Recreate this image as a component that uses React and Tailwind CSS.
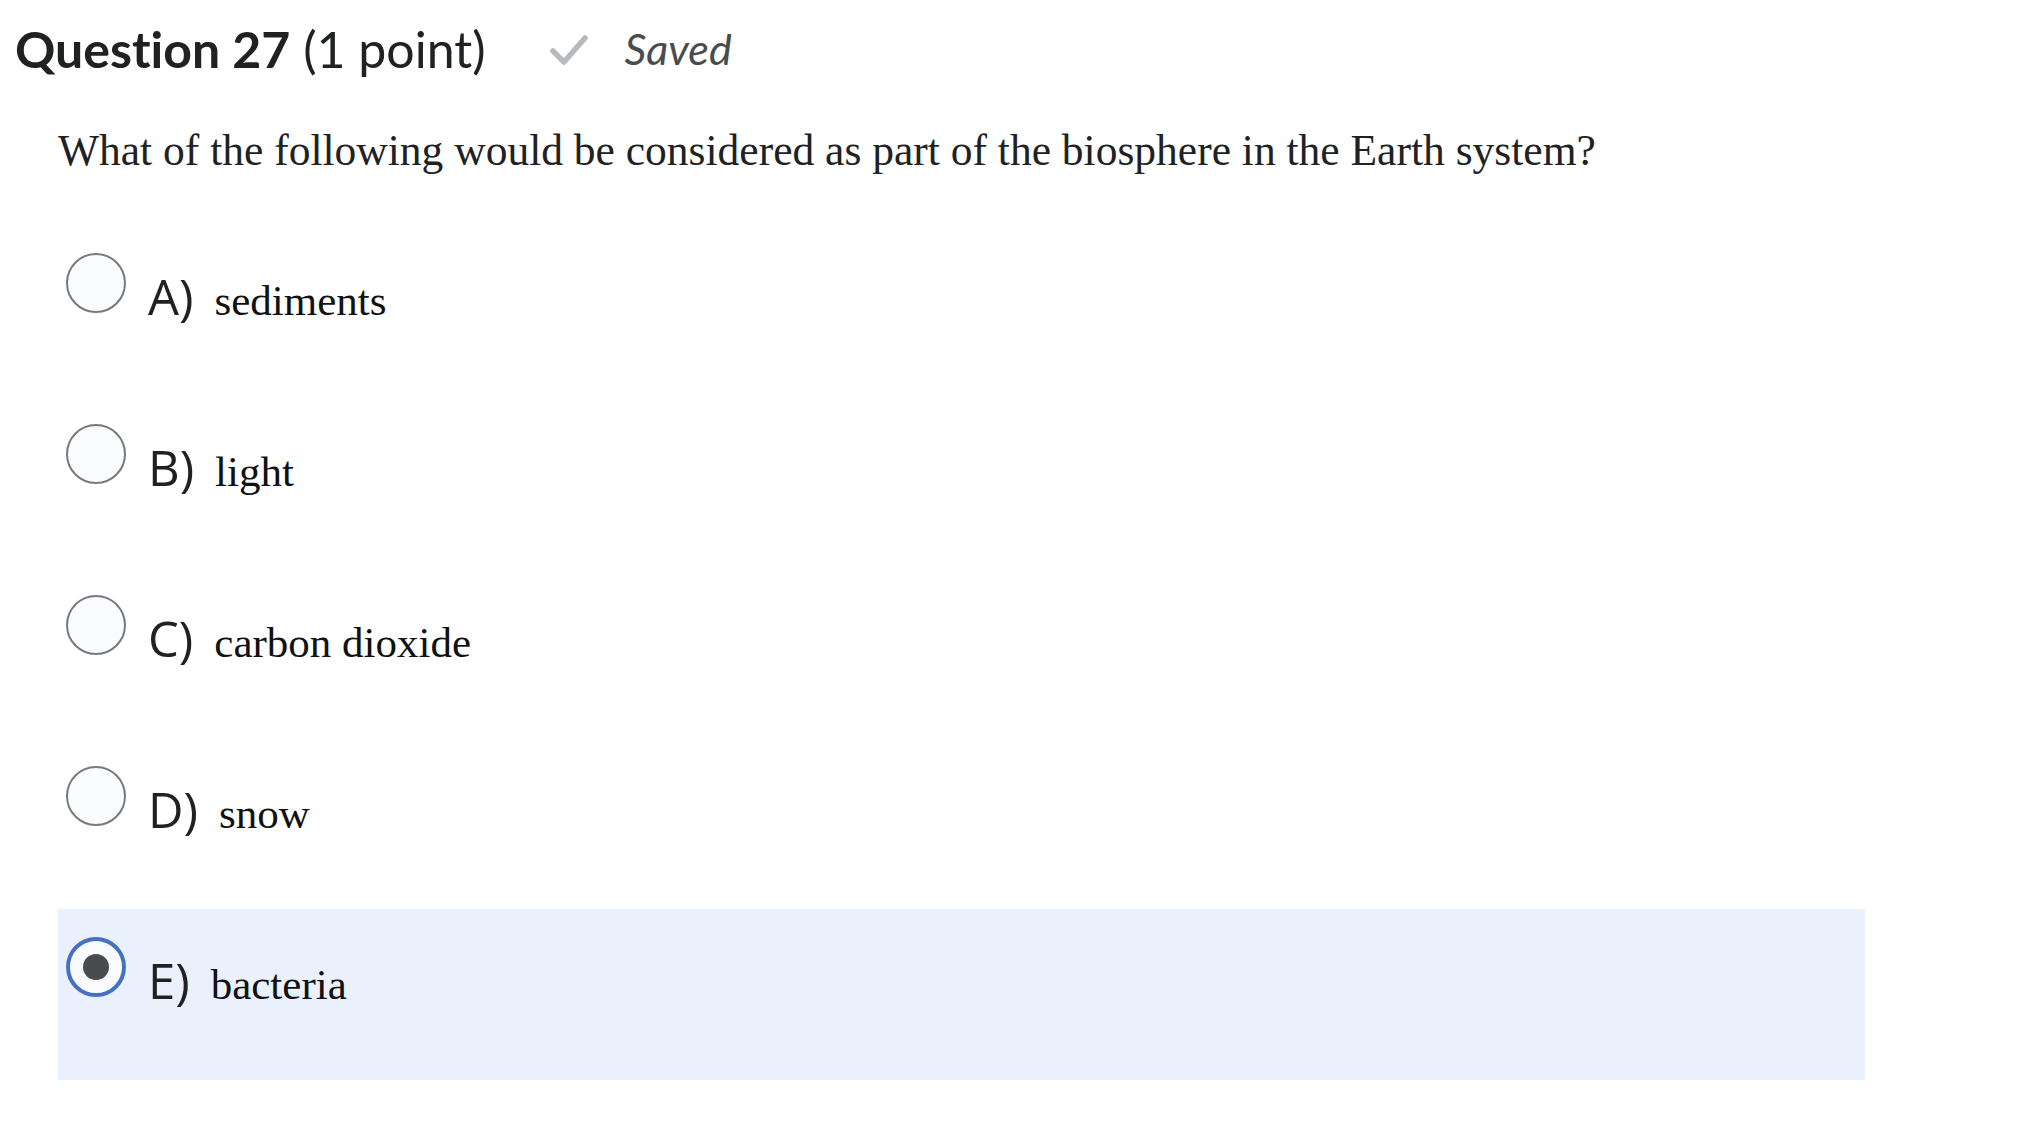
import { useState } from "react";

const choices = [
  { letter: "A)", text: "sediments" },
  { letter: "B)", text: "light" },
  { letter: "C)", text: "carbon dioxide" },
  { letter: "D)", text: "snow" },
  { letter: "E)", text: "bacteria" },
];

export default function App() {
  const [selected, setSelected] = useState(4);

  return (
    <div className="min-h-screen bg-white text-[#202122]">
      {/* Header */}
      <div className="flex items-center pl-[15px] pt-[21px] font-['Lato',sans-serif] [font-variant-ligatures:none]">
        <h2 className="text-[50px] leading-[56px]">
          <span className="font-bold">Question 27</span>{" "}
          <span className="font-normal">(1 point)</span>
        </h2>
        <svg
          className="ml-[64px] mt-[2px]"
          width="38"
          height="30"
          viewBox="0 0 38 30"
          fill="none"
        >
          <path
            d="M3 16 L14 27 L35 3"
            stroke="#b7babd"
            strokeWidth="5.5"
            strokeLinecap="round"
            strokeLinejoin="round"
          />
        </svg>
        <span className="ml-[37px] text-[43px] italic text-[#494c4e] leading-[56px]">
          Saved
        </span>
      </div>

      {/* Question */}
      <p className="mt-[48px] ml-[58px] font-['Liberation_Serif',serif] text-[43.5px] leading-[50px] text-[#202122]">
        What of the following would be considered as part of the biosphere in
        the Earth system?
      </p>

      {/* Choices */}
      <div className="mt-[50px] ml-[58px] w-[1807px]">
        {choices.map((c, i) => {
          const isSel = selected === i;
          return (
            <div
              key={c.letter}
              onClick={() => setSelected(i)}
              className={`flex h-[171px] items-start pl-2 pt-[28px] cursor-pointer ${
                isSel ? "bg-[#eaf1fc]" : "bg-white"
              }`}
            >
              {isSel ? (
                <div className="flex h-[60px] w-[60px] shrink-0 items-center justify-center rounded-full border-[4px] border-[#4571c4] bg-[#f9fbff]">
                  <div className="h-[26px] w-[26px] rounded-full bg-[#494c4e]" />
                </div>
              ) : (
                <div className="h-[60px] w-[60px] shrink-0 rounded-full border-2 border-[#78797b] bg-[#f9fbff]" />
              )}
              <div className="ml-[22px] mt-[19px] flex items-baseline">
                <span className="font-['Open_Sans',sans-serif] text-[49px] leading-[48px] text-[#202122]">
                  {c.letter}
                </span>
                <span className="ml-[21px] font-['Liberation_Serif',serif] text-[43px] leading-[48px] text-[#111]">
                  {c.text}
                </span>
              </div>
            </div>
          );
        })}
      </div>
    </div>
  );
}
